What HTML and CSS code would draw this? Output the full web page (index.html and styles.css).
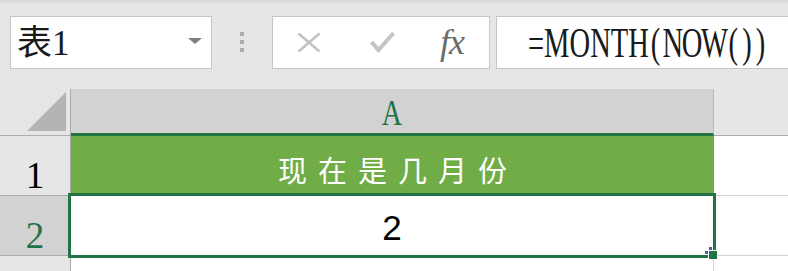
FILE: index.html
```html
<!DOCTYPE html>
<html lang="zh">
<head>
<meta charset="utf-8">
<title>表1</title>
<link rel="stylesheet" href="styles.css">
</head>
<body>
<div class="app">
  <div class="toolbar">
    <div class="namebox">
      <span class="name-text">表1</span>
      <svg class="dropdown" width="14" height="6" viewBox="0 0 14 6"><polygon points="0,0 14,0 7,6" fill="#7f7f7f"/></svg>
    </div>
    <div class="grip"><i></i><i></i><i></i></div>
    <div class="fxbox">
      <svg class="ico-x" width="24" height="21" viewBox="0 0 24 21"><path d="M1.5 1.5 L22.5 19.5 M22.5 1.5 L1.5 19.5" stroke="#c2c2c2" stroke-width="2.6" fill="none"/></svg>
      <svg class="ico-check" width="25" height="22" viewBox="0 0 25 22"><path d="M1.5 11 L8.5 19 L23.5 2" stroke="#c4c4c4" stroke-width="4" fill="none" stroke-linejoin="miter"/></svg>
      <span class="fx">fx</span>
    </div>
    <div class="formula"><span class="formula-text">=MONTH<span class="p">(</span><span class="tight">NOW</span><span class="p">(</span><span class="p">)</span><span class="p">)</span></span></div>
  </div>

  <div class="sheet">
    <div class="row hdr">
      <div class="corner"><svg width="40" height="40" viewBox="0 0 40 40"><polygon points="39,0 39,39 0,39" fill="#b4b4b4"/></svg></div>
      <div class="colhead sel"><span class="narrow">A</span></div>
      <div class="rest-head"></div>
    </div>
    <div class="row r1">
      <div class="rowhead"><span>1</span></div>
      <div class="cell title">现在是几月份</div>
      <div class="rest"></div>
    </div>
    <div class="row r2">
      <div class="rowhead sel"><span>2</span></div>
      <div class="cell value">2</div>
      <div class="rest"></div>
    </div>
    <div class="row r3">
      <div class="rowhead"></div>
      <div class="cell"></div>
      <div class="rest"></div>
    </div>
    <div class="selection"></div>
    <div class="handle"></div>
    <div class="dot d1"></div>
    <div class="dot d2"></div>
  </div>
</div>
</body>
</html>
```

FILE: styles.css
```css
html, body {
  margin: 0;
  padding: 0;
}
body {
  width: 788px;
  height: 271px;
  overflow: hidden;
  background: #e6e6e6;
  font-family: "Liberation Serif", "Noto Sans CJK SC", serif;
}
.app {
  width: 788px;
  height: 271px;
  overflow: hidden;
}
.toolbar {
  height: 89px;
  box-sizing: border-box;
  padding-top: 16px;
  display: flex;
  align-items: flex-start;
  background: linear-gradient(#d5d5d5 0, #e6e6e6 4px);
}
.namebox {
  margin-left: 10px;
  width: 202px;
  height: 53px;
  box-sizing: border-box;
  background: #fff;
  border: 1px solid #c6c6c6;
  display: flex;
  align-items: center;
  padding-left: 6px;
  padding-right: 9px;
}
.name-text {
  font-family: "Liberation Serif", "Noto Sans CJK SC", serif;
  font-size: 35px;
  color: #1a1a1a;
  line-height: 1;
  margin-top: 2px;
}
.dropdown {
  margin-left: auto;
  margin-top: -3px;
}
.grip {
  margin-left: 28px;
  margin-top: 16px;
  width: 4px;
  display: flex;
  flex-direction: column;
  gap: 4px;
}
.grip i {
  display: block;
  width: 4px;
  height: 4px;
  background: #adadad;
}
.fxbox {
  margin-left: 28px;
  width: 218px;
  height: 53px;
  box-sizing: border-box;
  background: #fff;
  border: 1px solid #c6c6c6;
  display: flex;
  align-items: center;
}
.ico-x {
  margin-left: 24px;
  margin-top: -1px;
}
.ico-check {
  margin-left: 49px;
  margin-top: -1px;
}
.fx {
  margin-left: 45px;
  font-family: "Liberation Serif", serif;
  font-style: italic;
  font-size: 36px;
  color: #6b6b6b;
  line-height: 1;
  margin-top: -2px;
  letter-spacing: -1px;
}
.formula {
  margin-left: 6px;
  flex: 1;
  margin-right: -4px;
  height: 53px;
  box-sizing: border-box;
  background: #fff;
  border: 1px solid #c6c6c6;
  display: flex;
  align-items: center;
  padding-left: 31px;
  overflow: hidden;
}
.formula-text {
  display: inline-block;
  font-family: "Liberation Serif", serif;
  font-size: 42px;
  line-height: 1;
  color: #1a1a1a;
  transform: scaleX(0.68);
  transform-origin: left center;
  white-space: nowrap;
  margin-top: 1px;
}
.formula-text .p {
  margin: 0 3px;
}
.formula-text .tight {
  letter-spacing: -2px;
}

/* sheet */
.sheet {
  position: relative;
  display: flex;
  flex-direction: column;
}
.row {
  display: flex;
}
.hdr {
  height: 47px;
}
.corner {
  width: 71px;
  box-sizing: border-box;
  border-right: 1px solid #ababab;
  border-bottom: 1px solid #ababab;
  display: flex;
  justify-content: flex-end;
  align-items: flex-end;
  padding: 0 3px 3px 0;
}
.colhead {
  width: 643px;
  box-sizing: border-box;
  background: #d2d2d2;
  border-right: 1px solid #b8b8b8;
  border-bottom: 3px solid #217346;
  display: flex;
  justify-content: center;
  align-items: flex-end;
  color: #217346;
  font-size: 36px;
  line-height: 1;
}
.narrow {
  display: inline-block;
  transform: scaleX(0.78);
  margin-bottom: 2px;
}
.rest-head {
  flex: 1;
  border-bottom: 1px solid #ababab;
  box-sizing: border-box;
}
.r1, .r2 {
  height: 60px;
}
.r3 {
  height: 40px;
}
.rowhead {
  width: 71px;
  box-sizing: border-box;
  border-right: 1px solid #ababab;
  border-bottom: 1px solid #ababab;
  background: #e6e6e6;
  display: flex;
  justify-content: center;
  align-items: flex-end;
  font-size: 37px;
  line-height: 37px;
  color: #000;
  padding-bottom: 1px;
}
.rowhead.sel {
  background: #d2d2d2;
  color: #217346;
}
.cell {
  width: 643px;
  box-sizing: border-box;
  background: #fff;
  border-right: 1px solid #d4d4d4;
  border-bottom: 1px solid #d4d4d4;
  display: flex;
  justify-content: center;
  align-items: center;
}
.rest {
  flex: 1;
  background: #fff;
  border-bottom: 1px solid #d4d4d4;
  box-sizing: border-box;
}
.r3 .rest {
  border-bottom: none;
}
.title {
  background: #70ad47;
  border-right: none;
  color: #fff;
  font-family: "Noto Sans CJK SC", sans-serif;
  font-size: 29px;
  letter-spacing: 11px;
  padding-left: 11px;
  padding-top: 8px;
  line-height: 1;
}
.value {
  font-family: "Liberation Sans", Arial, sans-serif;
  font-size: 35px;
  color: #000;
  line-height: 1;
  padding-top: 3px;
}
.selection {
  position: absolute;
  left: 68px;
  top: 104px;
  width: 648px;
  height: 65px;
  box-sizing: border-box;
  border: 3px solid #217346;
}
.handle {
  position: absolute;
  left: 708px;
  top: 161px;
  width: 10px;
  height: 10px;
  box-sizing: border-box;
  border: 1px solid #fff;
  background: #217346;
}
.dot {
  position: absolute;
  width: 3px;
  height: 3px;
  background: #4a5db5;
}
.d1 { left: 705px; top: 162px; }
.d2 { left: 709px; top: 158px; }
```
